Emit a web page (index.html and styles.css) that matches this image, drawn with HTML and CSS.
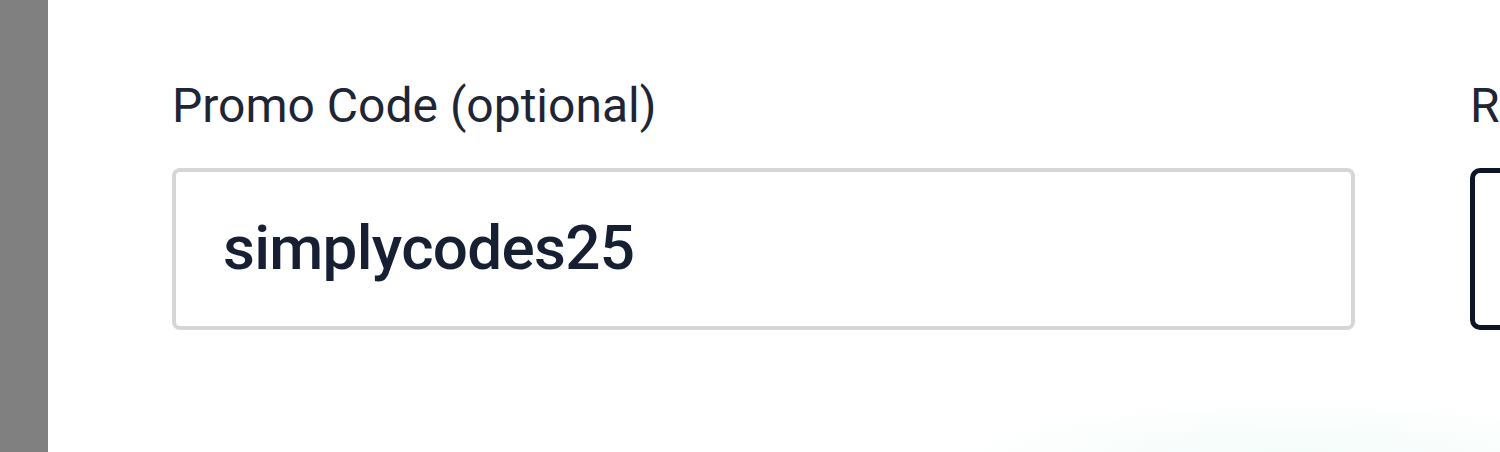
FILE: index.html
```html
<!DOCTYPE html>
<html lang="en">

<head>
	<meta charset="UTF-8">
	<meta name="viewport" content="width=device-width, initial-scale=1.0">
	<title>Checkout</title>

	<link rel="stylesheet" href="styles.css">
</head>

<body>
	<div class="screen">
		<aside class="sidebar"></aside>

		<main class="content">
			<form class="fields">
				<div class="field">
					<label for="promo-code" class="field-label">Promo Code (optional)</label>
					<input id="promo-code" class="field-input" type="text" value="simplycodes25">
				</div>

				<div class="field">
					<label for="referral-code" class="field-label">Referral Code</label>
					<input id="referral-code" class="field-input field-input--active" type="text">
				</div>
			</form>
		</main>
	</div>
</body>

</html>
```

FILE: styles.css
```css
*,
*::before,
*::after {
	margin: 0;
	padding: 0;
	box-sizing: border-box;

	font-family: Roboto, "Liberation Sans", Arial, sans-serif;

	--text-color: #1e2636;
	--input-text-color: #172033;
	--border-color: #d6d6d6;
	--active-border-color: #0e1525;
	--sidebar-color: #808080;
	--background-color: #fff;
}

body {
	overflow: hidden;
	background-color: var(--background-color);
}

.screen {
	width: 100%;
	height: 100vh;

	display: flex;
}

.sidebar {
	width: 48px;
	flex-shrink: 0;

	background-color: var(--sidebar-color);
}

.content {
	flex: 1;
	min-width: 0;
	padding: 78px 0 0 124px;

	overflow: hidden;
	background:
		radial-gradient(ellipse 520px 90px at 1250px 460px, rgba(215, 245, 238, 0.3), transparent 70%),
		var(--background-color);
}

.fields {
	display: grid;
	grid-template-columns: 1183px 400px;
	gap: 115px;
}

.field {
	display: flex;
	flex-direction: column;
	gap: 34px;
}

.field-label {
	height: 56px;

	color: var(--text-color);
	font-size: 48px;
	line-height: 56px;
	white-space: nowrap;
}

.field-input {
	width: 100%;
	height: 162px;
	padding: 0 0 4px 47px;

	border: 4px solid var(--border-color);
	border-radius: 8px;
	outline: none;

	background-color: var(--background-color);
	color: var(--input-text-color);
	font-size: 62px;
	font-weight: 500;
	letter-spacing: -0.7px;
}

.field-input--active {
	border: 5px solid var(--active-border-color);
	border-radius: 10px;
}
```
